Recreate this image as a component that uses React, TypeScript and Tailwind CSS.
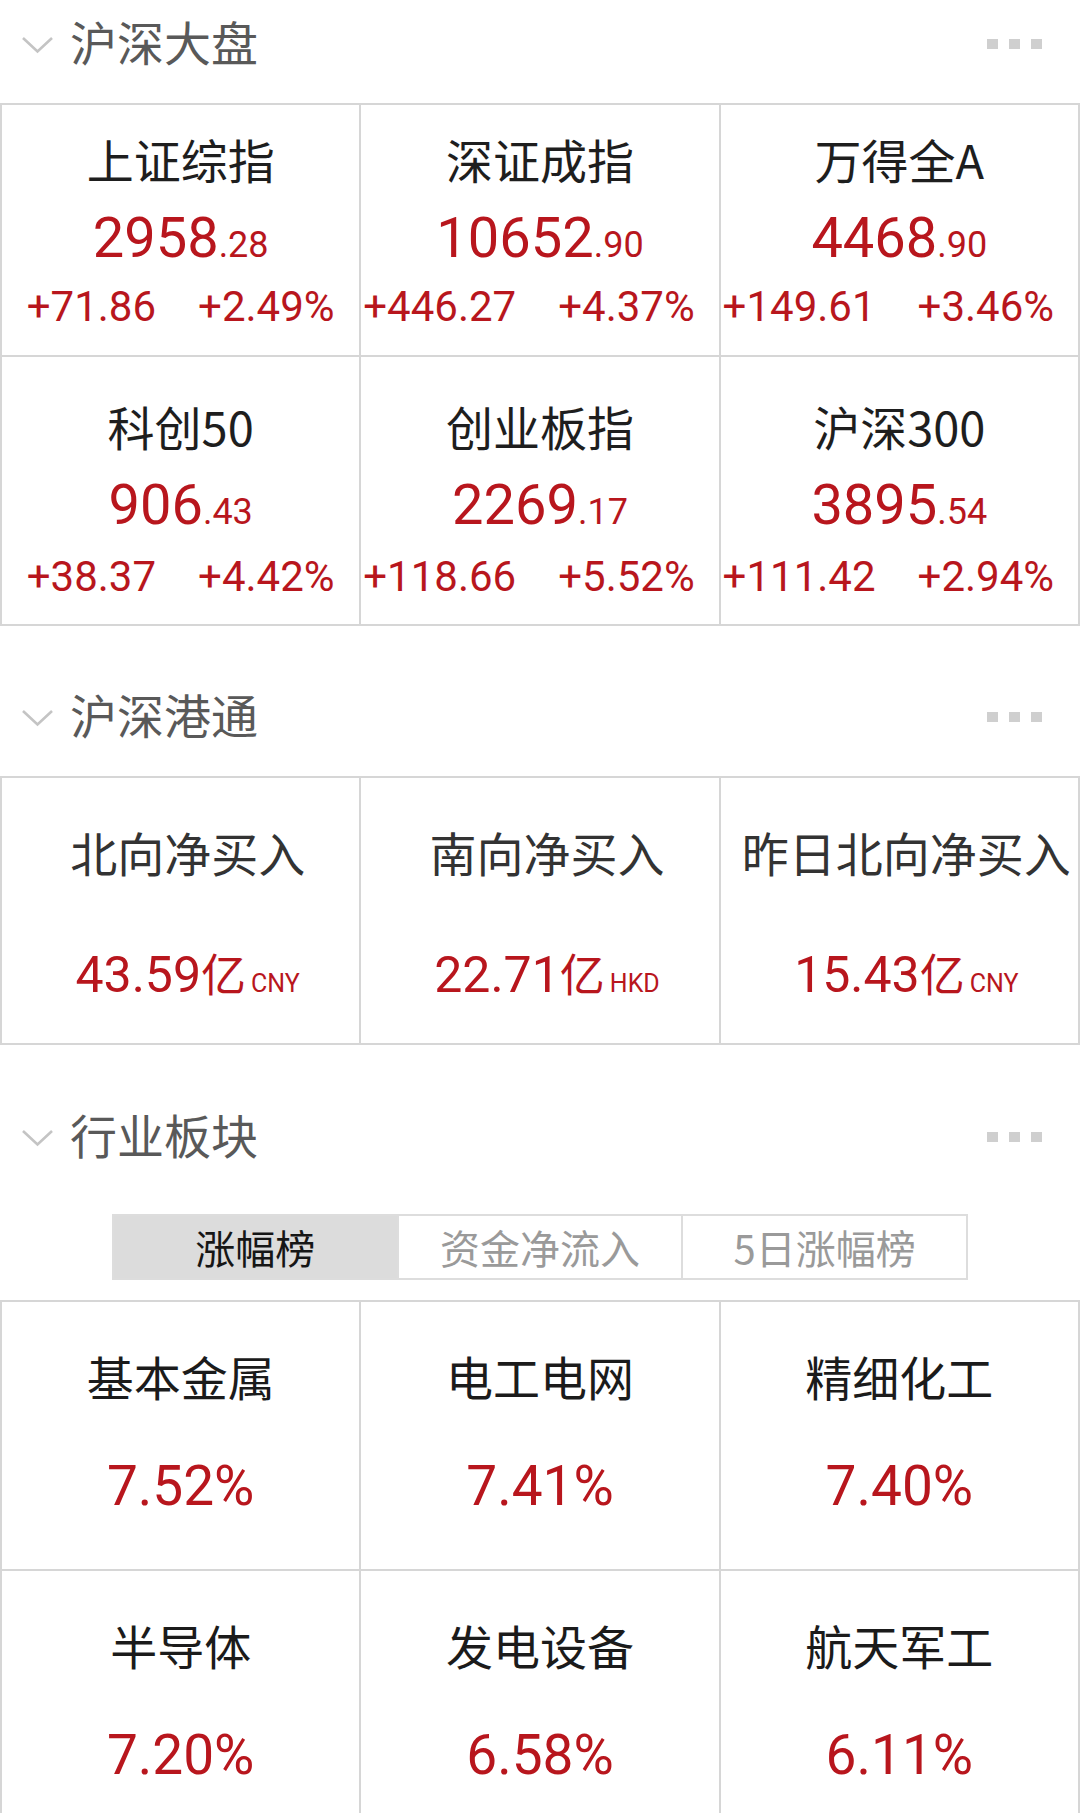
import React from "react";

type IndexItem = {
  name: string;
  main: string;
  decimal: string;
  change: string;
  percent: string;
  shift?: boolean;
};

type FlowItem = {
  name: string;
  value: string;
  unit: string;
};

type SectorItem = {
  name: string;
  percent: string;
};

type RowLayout = {
  top: string;
  nameH: string;
  valueH: string;
};

const CJK = "font-['Noto_Sans_CJK_SC',sans-serif]";
const NUM = "font-['Roboto','Noto_Sans_CJK_SC',sans-serif]";
const RED = "text-[#b8161d]";

const indexRows: IndexItem[][] = [
  [
    { name: "上证综指", main: "2958", decimal: ".28", change: "+71.86", percent: "+2.49%" },
    { name: "深证成指", main: "10652", decimal: ".90", change: "+446.27", percent: "+4.37%", shift: true },
    { name: "万得全A", main: "4468", decimal: ".90", change: "+149.61", percent: "+3.46%", shift: true },
  ],
  [
    { name: "科创50", main: "906", decimal: ".43", change: "+38.37", percent: "+4.42%" },
    { name: "创业板指", main: "2269", decimal: ".17", change: "+118.66", percent: "+5.52%", shift: true },
    { name: "沪深300", main: "3895", decimal: ".54", change: "+111.42", percent: "+2.94%", shift: true },
  ],
];

const rowLayouts: RowLayout[] = [
  { top: "pt-[17px]", nameH: "h-[74px] leading-[74px]", valueH: "h-[84px] leading-[84px]" },
  { top: "pt-[34px]", nameH: "h-[70px] leading-[70px]", valueH: "h-[89px] leading-[89px]" },
];

const flows: FlowItem[] = [
  { name: "北向净买入", value: "43.59", unit: "CNY" },
  { name: "南向净买入", value: "22.71", unit: "HKD" },
  { name: "昨日北向净买入", value: "15.43", unit: "CNY" },
];

const sectors: SectorItem[][] = [
  [
    { name: "基本金属", percent: "7.52%" },
    { name: "电工电网", percent: "7.41%" },
    { name: "精细化工", percent: "7.40%" },
  ],
  [
    { name: "半导体", percent: "7.20%" },
    { name: "发电设备", percent: "6.58%" },
    { name: "航天军工", percent: "6.11%" },
  ],
];

const tabs = ["涨幅榜", "资金净流入", "5日涨幅榜"];

function SectionHeader({ title, className = "" }: { title: string; className?: string }) {
  return (
    <div className={`flex h-[88px] items-center ${className}`}>
      <svg width="33" height="18" viewBox="0 0 33 18" className="ml-[21px] mt-[2px]">
        <path d="M2 2 L16.5 15.5 L31 2" fill="none" stroke="#c4c4c4" strokeWidth="2.6" />
      </svg>
      <span className={`${CJK} ml-[16px] pb-[7px] text-[47px] leading-none text-[#595959]`}>{title}</span>
      <div className="ml-auto mr-[38px] flex gap-[11px]">
        <span className="h-[10px] w-[11px] bg-[#cfcfcf]" />
        <span className="h-[10px] w-[11px] bg-[#cfcfcf]" />
        <span className="h-[10px] w-[11px] bg-[#cfcfcf]" />
      </div>
    </div>
  );
}

function IndexCell({ item, layout }: { item: IndexItem; layout: RowLayout }) {
  return (
    <div className={`flex flex-col items-center border-b-2 border-r-2 border-[#d6d6d6] ${layout.top}`}>
      <div className={`${CJK} ${layout.nameH} text-[47px] text-[#1e1e1e]`}>{item.name}</div>
      <div className={`${NUM} ${RED} ${layout.valueH}`}>
        <span className="text-[56px]">{item.main}</span>
        <span className="text-[36px]">{item.decimal}</span>
      </div>
      <div
        className={`${NUM} ${RED} flex h-[54px] w-full justify-center gap-[42px] text-[42px] leading-[54px] ${
          item.shift ? "pr-[22px]" : ""
        }`}
      >
        <span>{item.change}</span>
        <span>{item.percent}</span>
      </div>
    </div>
  );
}

export default function App() {
  return (
    <div className="min-h-[1813px] w-[1080px] overflow-hidden bg-white">
      <SectionHeader title="沪深大盘" />

      <div className="mt-[15px] border-l-2 border-t-2 border-[#d6d6d6]">
        {indexRows.map((row, r) => (
          <div key={r} className={`grid grid-cols-3 ${r === 0 ? "h-[252px]" : "h-[269px]"}`}>
            {row.map((item) => (
              <IndexCell key={item.name} item={item} layout={rowLayouts[r]} />
            ))}
          </div>
        ))}
      </div>

      <SectionHeader title="沪深港通" className="mt-[47px]" />

      <div className="mt-[15px] grid h-[269px] grid-cols-3 border-l-2 border-t-2 border-[#d6d6d6]">
        {flows.map((flow) => (
          <div
            key={flow.name}
            className="flex flex-col items-center border-b-2 border-r-2 border-[#d6d6d6] pl-[14px] pt-[39px]"
          >
            <div className={`${CJK} h-[70px] whitespace-nowrap text-[47px] leading-[70px] text-[#333333]`}>
              {flow.name}
            </div>
            <div className={`${NUM} ${RED} mt-[51px] flex h-[70px] items-baseline leading-[70px]`}>
              <span className="text-[50px]">{flow.value}</span>
              <span className={`${CJK} text-[45px]`}>亿</span>
              <span className="ml-[5px] text-[25px]">{flow.unit}</span>
            </div>
          </div>
        ))}
      </div>

      <SectionHeader title="行业板块" className="mt-[48px]" />

      <div className="ml-[112px] mt-[33px] flex h-[66px] w-[856px] border-2 border-[#dddddd]">
        {tabs.map((tab, i) => (
          <div
            key={tab}
            className={`${CJK} flex flex-1 items-center justify-center text-[40px] leading-none ${
              i === 0 ? "bg-[#dcdcdc] text-[#161616]" : "bg-white text-[#9a9a9a]"
            } ${i < 2 ? "border-r-2 border-[#dddddd]" : ""}`}
          >
            {tab}
          </div>
        ))}
      </div>

      <div className="mt-[20px] border-l-2 border-t-2 border-[#d6d6d6]">
        {sectors.map((row, r) => (
          <div key={r} className="grid h-[269px] grid-cols-3">
            {row.map((s) => (
              <div
                key={s.name}
                className="flex flex-col items-center border-b-2 border-r-2 border-[#d6d6d6] pt-[39px]"
              >
                <div className={`${CJK} h-[70px] text-[47px] leading-[70px] text-[#1b1b1b]`}>{s.name}</div>
                <div className={`${NUM} ${RED} mt-[40px] h-[70px] text-[55px] leading-[70px]`}>{s.percent}</div>
              </div>
            ))}
          </div>
        ))}
      </div>
    </div>
  );
}
